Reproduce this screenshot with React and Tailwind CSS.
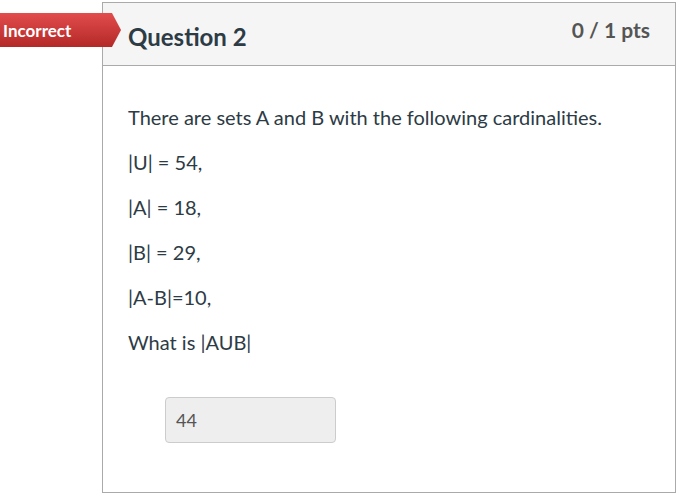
import React from "react";

export default function App() {
  const lines = [
    "There are sets A and B with the following cardinalities.",
    "|U| = 54,",
    "|A| = 18,",
    "|B| = 29,",
    "|A-B|=10,",
    "What is |AUB|",
  ];
  return (
    <div
      className="relative w-[690px] h-[502px] bg-white overflow-hidden"
      style={{ fontFamily: "Lato, 'Noto Sans', sans-serif" }}
    >
      <div className="ml-[102px] mt-[2px] w-[574px] h-[491px] border border-[#aaaaaa] flex flex-col">
        <div className="h-[63px] bg-[#f5f5f5] border-b border-[#aaaaaa] flex justify-between items-start pl-[25px] pr-[25px] shrink-0">
          <div className="pt-[20px] text-[24px] leading-[28px] font-bold text-[#2d3b45]">
            Question 2
          </div>
          <div className="pt-[12px] text-[21px] leading-[30px] font-bold text-[#555555]">
            0 / 1 pts
          </div>
        </div>
        <div className="pl-[25px] pt-[36px] text-[20px] leading-[30px] text-[#2d3b45]">
          {lines.map((l, i) => (
            <p key={i} className="mb-[15px]">
              {l}
            </p>
          ))}
          <div className="mt-[40px] ml-[37px] w-[171px] h-[46px] bg-[#eeeeee] border border-[#cccccc] rounded-[4px] flex items-center pl-[10px] text-[18px] text-[#555555]">
            44
          </div>
        </div>
      </div>
      <div
        className="absolute left-0 top-[13px] w-[121px] h-[34px] bg-gradient-to-b from-[#e24c4c] to-[#b42828] flex items-center pl-[3px] pt-[2px] text-white font-bold text-[17px]"
        style={{ clipPath: "polygon(0 0, 112px 0, 121px 50%, 112px 100%, 0 100%)" }}
      >
        Incorrect
      </div>
    </div>
  );
}
